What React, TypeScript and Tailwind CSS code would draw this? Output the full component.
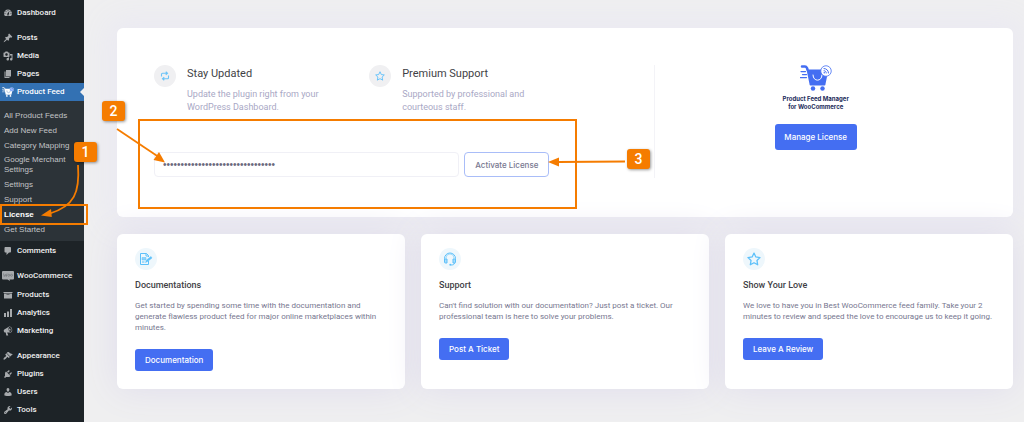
import React from "react";

interface MenuItem {
  label: string;
  icon: React.ReactNode;
}

interface InfoCard {
  title: string;
  text: string;
  action: string;
  icon: React.ReactNode;
}

const DashIcon = ({ d }: { d: string }) => (
  <svg viewBox="0 0 20 20" className="h-[10px] w-[10px] text-[#a7aaad]" fill="currentColor" aria-hidden="true">
    <path d={d} />
  </svg>
);

// Shopping cart with a feed badge, used in the menu and in the license card
const CartLogo = ({ className, cart, badge, line }: { className: string; cart: string; badge: string; line: string }) => (
  <svg viewBox="0 0 64 52" className={className} fill="none" aria-hidden="true">
    <path d="M4 3h6c2 0 3 1 4 3l1 3" stroke={cart} strokeWidth="5" strokeLinecap="round" />
    <path d="M13 9h44l-6 29c0 2-1 3-3 3H22c-2 0-3-1-3-3z" fill={cart} />
    <path d="M2 13h9M5 19h8M1 25h12" stroke={cart} strokeWidth="2.5" strokeLinecap="round" />
    <circle cx="26" cy="47" r="4.5" fill={cart} />
    <circle cx="45" cy="47" r="4.5" fill={cart} />
    <path d="M26 20c0 14 18 14 18 0" stroke={line} strokeWidth="2" strokeLinecap="round" />
    <circle cx="52" cy="12" r="10.5" fill={badge} stroke={cart} strokeWidth="1.6" />
    <path d="M48 7c5 0 9 4 9 9M48 11.500c3 0 4.500 2 4.500 4.500" stroke={cart} strokeWidth="2" strokeLinecap="round" />
    <circle cx="48.500" cy="15.500" r="1.500" fill={cart} />
  </svg>
);

const WooIcon = () => (
  <svg viewBox="0 0 24 20" className="h-[10px] w-[12px]" aria-hidden="true">
    <path d="M2 0h20a2 2 0 0 1 2 2v13a2 2 0 0 1-2 2h-7l1 3-5-3H2a2 2 0 0 1-2-2V2a2 2 0 0 1 2-2z" fill="#a7aaad" />
    <path d="M3 5l1.500 6L7 7l1.500 4L10 5" stroke="#6c7176" strokeWidth="1.300" fill="none" />
    <circle cx="13.500" cy="8.500" r="2" stroke="#6c7176" strokeWidth="1.300" fill="none" />
    <circle cx="19" cy="8.500" r="2" stroke="#6c7176" strokeWidth="1.300" fill="none" />
  </svg>
);

const topMenu: MenuItem[] = [
  {
    label: "Posts",
    icon: (
      <DashIcon d="M10.44 3.02l1.82-1.82 6.36 6.35-1.83 1.82c-1.05-.68-2.48-.57-3.41.36l-.75.75c-.92.93-1.04 2.35-.35 3.41l-1.83 1.82-2.41-2.41-2.8 2.79c-.42.42-3.38 2.71-3.8 2.29s1.86-3.39 2.28-3.81l2.79-2.79L4.1 9.36l1.83-1.82c1.05.69 2.48.57 3.4-.36l.75-.75c.93-.92 1.05-2.35.36-3.41z" />
    ),
  },
  {
    label: "Media",
    icon: (
      <DashIcon d="M13 11V4c0-.55-.45-1-1-1h-1.670L9 1H5L3.670 3H2c-.55 0-1 .45-1 1v7c0 .55.45 1 1 1h10c.55 0 1-.45 1-1zM7 4.500c1.380 0 2.500 1.120 2.500 2.500S8.380 9.500 7 9.500 4.500 8.380 4.500 7 5.620 4.500 7 4.500zM14 6h5v10.500c0 1.380-1.120 2.500-2.500 2.500S14 17.880 14 16.500s1.120-2.500 2.500-2.500c.17 0 .34.02.5.05V9h-3V6zm-4 8.050V13h2v3.500c0 1.380-1.120 2.500-2.500 2.500S7 17.880 7 16.500 8.120 14 9.500 14c.17 0 .34.02.5.05z" />
    ),
  },
  { label: "Pages", icon: <DashIcon d="M6 15V2h10v13H6zm-1 1h8v2H3V5h2v11z" /> },
];

const shopMenu: MenuItem[] = [
  { label: "Products", icon: <DashIcon d="M19 4v2H1V4h18zM2 7h16v10H2V7zm11 3V9H7v1h6z" /> },
  { label: "Analytics", icon: <DashIcon d="M18 18V2h-4v16h4zm-6 0V7H8v11h4zm-6 0v-8H2v8h4z" /> },
  {
    label: "Marketing",
    icon: (
      <DashIcon d="M18.15 5.94c.46 1.62.38 3.22-.02 4.48-.42 1.28-1.26 2.18-2.3 2.48-.16.06-.26.06-.4.06-.06.02-.12.02-.18.02-.06.02-.14.02-.22.02h-6.8l2.22 5.5c.02.14-.06.26-.14.34-.08.1-.24.16-.34.16H6.95c-.1 0-.26-.06-.34-.16-.08-.08-.16-.2-.14-.34l-1-5.5H4.25l-.02-.02c-.5.06-1.08-.18-1.54-.62s-.88-1.08-1.06-1.88c-.24-.8-.2-1.56-.02-2.2.18-.62.58-1.08 1.06-1.3l.02-.02 9-5.4c.1-.06.18-.1.24-.16.06-.04.14-.08.24-.12.16-.08.28-.12.5-.18 1.04-.3 2.24.1 3.22.98s1.84 2.24 2.26 3.86zm-2.58 5.98h-.02c.4-.1.74-.34 1.04-.7.58-.7.86-1.76.86-3.04 0-.64-.1-1.3-.28-1.98-.34-1.36-1.02-2.5-1.78-3.24s-1.68-1.1-2.46-.88c-.82.22-1.4.96-1.7 2-.32 1.04-.28 2.36.06 3.72.38 1.36 1 2.5 1.8 3.24.78.74 1.62 1.1 2.48.88zm-2.54-7.08c.22-.04.42-.02.62.04.38.16.76.48 1.02 1s.42 1.2.42 1.78c0 .3-.04.56-.12.8-.18.48-.44.84-.86.94-.34.1-.8-.06-1.14-.4s-.64-.86-.78-1.5c-.18-.62-.12-1.24.02-1.72s.48-.84.82-.94z" />
    ),
  },
];

const siteMenu: MenuItem[] = [
  {
    label: "Appearance",
    icon: (
      <DashIcon d="M14.48 11.06L7.41 3.99l1.5-1.5c.5-.56 2.3-.47 3.51.32 1.21.8 1.43 1.28 2.91 2.1 1.18.64 2.45 1.26 4.45.85zm-.71.71L6.7 4.7 4.93 6.47c-.39.39-.39 1.02 0 1.41l1.06 1.06c.39.39.39 1.03 0 1.42-.6.6-1.43 1.11-2.21 1.69-.35.26-.7.53-1.01.84C1.43 14.23.4 16.08 1.4 17.07c.99 1 2.84-.03 4.18-1.36.31-.31.58-.66.85-1.02.57-.78 1.08-1.61 1.69-2.21.39-.39 1.02-.39 1.41 0l1.06 1.06c.39.39 1.02.39 1.41 0z" />
    ),
  },
  {
    label: "Plugins",
    icon: (
      <DashIcon d="M13.11 4.36L9.87 7.6 8 5.73l3.24-3.24c.35-.34 1.05-.2 1.56.32.52.51.66 1.21.31 1.55zm-8 1.77l.91-1.12 9.01 9.01-1.19.84c-.71.71-2.63 1.16-3.82 1.16H6.14L4.9 17.26c-.59.59-1.54.59-2.12 0-.59-.58-.59-1.53 0-2.12l1.24-1.24v-3.88c0-1.13.4-3.19 1.09-3.89zm7.26 3.97l3.24-3.24c.34-.35 1.04-.21 1.55.31.52.51.66 1.21.31 1.55l-3.24 3.25z" />
    ),
  },
  {
    label: "Users",
    icon: (
      <DashIcon d="M10 9.25c-2.27 0-2.73-3.44-2.73-3.44C7 4.02 7.82 2 9.97 2c2.16 0 2.98 2.02 2.71 3.81 0 0-.41 3.44-2.68 3.44zm0 2.57L12.72 10c2.39 0 4.52 2.33 4.52 4.53v2.49s-3.65 1.13-7.24 1.13c-3.65 0-7.24-1.13-7.24-1.13v-2.49c0-2.25 1.94-4.48 4.47-4.48z" />
    ),
  },
  {
    label: "Tools",
    icon: (
      <DashIcon d="M16.68 9.77c-1.34 1.34-3.3 1.67-4.95.99l-5.41 6.52c-.99.99-2.59.99-3.58 0s-.99-2.59 0-3.57l6.52-5.42c-.68-1.65-.35-3.61.99-4.95 1.28-1.28 3.12-1.62 4.72-1.06l-2.89 2.89 2.82 2.82 2.86-2.87c.53 1.58.18 3.39-1.08 4.65zM3.81 16.21c.4.39 1.04.39 1.43 0 .4-.4.4-1.04 0-1.43-.39-.4-1.03-.4-1.43 0-.39.39-.39 1.03 0 1.43z" />
    ),
  },
];

const subMenu = [
  "All Product Feeds",
  "Add New Feed",
  "Category Mapping",
  "Google Merchant Settings",
  "Settings",
  "Support",
  "License",
  "Get Started",
];

const RepeatGlyph = () => (
  <svg viewBox="0 0 20 20" className="h-[10px] w-[10px]" fill="none" stroke="#6cc4f8" strokeWidth="2.2" aria-hidden="true">
    <path d="M3 11V6.500A2 2 0 0 1 5 4.500h9M11.500 1.500l3.500 3-3.500 3M17 9v4.500a2 2 0 0 1-2 2H6M8.500 12.500l-3.500 3 3.500 3" />
  </svg>
);

const StarGlyph = ({ className }: { className: string }) => (
  <svg viewBox="0 0 20 20" className={className} fill="none" stroke="#5cc0fa" strokeWidth="1.8" strokeLinejoin="round" aria-hidden="true">
    <path d="M10 1.500l2.600 5.600 6 .8-4.400 4.200 1.100 6.200L10 15.300l-5.300 3 1.100-6.200L1.400 7.900l6-.8z" />
  </svg>
);

const DocumentGlyph = () => (
  <svg viewBox="0 0 28 28" className="h-[14px] w-[14px]" fill="none" stroke="#5cc0fa" strokeWidth="2" aria-hidden="true">
    <path d="M19 18v7H3V3h12l4 4v3" />
    <path d="M14 3v5h5" />
    <path d="M6 11h8v5H6z" fill="#8ed3fb" strokeWidth="1" />
    <path d="M6 20h5" />
    <path d="M13 21l2-5 9-7 2 3-9 7z" fill="#5cc0fa" strokeWidth="1" />
  </svg>
);

const HeadsetGlyph = () => (
  <svg viewBox="0 0 28 28" className="h-[14px] w-[14px]" fill="none" stroke="#5cc0fa" strokeWidth="2" aria-hidden="true">
    <path d="M3 15v-2a11 11 0 0 1 22 0v2" />
    <path d="M6 13v-1a8 8 0 0 1 16 0v1" strokeWidth="1" />
    <path d="M3 14h5v8H5a2 2 0 0 1-2-2zM20 14h5v6a2 2 0 0 1-2 2h-3z" fill="#a5dcfc" />
    <path d="M23 22c0 3-3 4-7 4" />
    <circle cx="14.500" cy="25.500" r="1.800" fill="#5cc0fa" stroke="none" />
  </svg>
);

const cards: InfoCard[] = [
  {
    title: "Documentations",
    text: "Get started by spending some time with the documentation and generate flawless product feed for major online marketplaces within minutes.",
    action: "Documentation",
    icon: <DocumentGlyph />,
  },
  {
    title: "Support",
    text: "Can't find solution with our documentation? Just post a ticket. Our professional team is here to solve your problems.",
    action: "Post A Ticket",
    icon: <HeadsetGlyph />,
  },
  {
    title: "Show Your Love",
    text: "We love to have you in Best WooCommerce feed family. Take your 2 minutes to review and speed the love to encourage us to keep it going.",
    action: "Leave A Review",
    icon: <StarGlyph className="h-[14px] w-[14px]" />,
  },
];

const MenuLink = ({ label, icon }: MenuItem) => (
  <a href="#" className="flex h-[18px] items-center text-[#f0f0f1]">
    <span className="flex w-[17px] justify-center pr-[2px]">{icon}</span>
    {label}
  </a>
);

const MenuGroup = ({ items }: { items: MenuItem[] }) => (
  <>
    {items.map((item) => (
      <MenuLink key={item.label} {...item} />
    ))}
  </>
);

const Sidebar = () => (
  <nav className="relative z-10 w-[84px] shrink-0 bg-[#1d2327] pt-1 text-[8px] font-medium">
    <MenuLink
      label="Dashboard"
      icon={
        <DashIcon d="M3.76 16h12.48c1.1-1.37 1.76-3.11 1.76-5 0-4.42-3.58-8-8-8s-8 3.58-8 8c0 1.89.66 3.63 1.76 5zM10 4c.55 0 1 .45 1 1s-.45 1-1 1-1-.45-1-1 .45-1 1-1zM6 6c.55 0 1 .45 1 1s-.45 1-1 1-1-.45-1-1 .45-1 1-1zm8 0c.55 0 1 .45 1 1s-.45 1-1 1-1-.45-1-1 .45-1 1-1zm-5.37 5.55L12 7v6c0 1.1-.9 2-2 2s-2-.9-2-2c0-.57.24-1.08.63-1.45zM4 10c.55 0 1 .45 1 1s-.45 1-1 1-1-.45-1-1 .45-1 1-1zm12 0c.55 0 1 .45 1 1s-.45 1-1 1-1-.45-1-1 .45-1 1-1zm-5 3c0-.55-.45-1-1-1s-1 .45-1 1 .45 1 1 1 1-.45 1-1z" />
      }
    />
    <div className="mt-[7px]">
      <MenuGroup items={topMenu} />
      <a href="#" className="flex h-[18px] items-center bg-[#3371b3] text-white">
        <span className="flex w-[17px] justify-center pr-[2px]">
          <CartLogo className="h-[10px] w-[12px]" cart="#ffffff" badge="#5b8df5" line="#3371b3" />
        </span>
        Product Feed
        <span className="ml-auto border-y-4 border-r-4 border-y-transparent border-r-[#efeff0]" />
      </a>
    </div>
    <ul className="bg-[#2c3338] pt-[7px] pb-1 pl-1 font-['Liberation_Sans'] font-normal text-[#c3c4c7]">
      {subMenu.map((label) => (
        <li key={label} className={label === "License" ? "font-bold text-white" : ""}>
          <a href="#" className="flex min-h-[15px] w-[72px] items-center py-[2px] leading-[10px]">
            {label}
          </a>
        </li>
      ))}
    </ul>
    <div className="mt-px">
      <MenuLink
        label="Comments"
        icon={
          <DashIcon d="M5 2h9c1.1 0 2 .9 2 2v7c0 1.1-.9 2-2 2h-2l-5 5v-5H5c-1.1 0-2-.9-2-2V4c0-1.1.9-2 2-2z" />
        }
      />
    </div>
    <div className="mt-[7px]">
      <MenuLink label="WooCommerce" icon={<WooIcon />} />
      <div className="mt-px">
        <MenuGroup items={shopMenu} />
      </div>
    </div>
    <div className="mt-[7px]">
      <MenuGroup items={siteMenu} />
    </div>
  </nav>
);

const Feature = ({ title, text, icon }: { title: string; text: string; icon: React.ReactNode }) => (
  <div className="flex gap-[11px]">
    <span className="flex h-[22px] w-[22px] shrink-0 items-center justify-center rounded-full bg-[#f0f0f2]">
      {icon}
    </span>
    <div>
      <h2 className="text-[11px] leading-[17px] text-[#3f3f46]">{title}</h2>
      <p className="mt-[6px] max-w-[150px] text-[9px] leading-[13px] text-[#a9a8c5]">{text}</p>
    </div>
  </div>
);

const LicenseCard = () => (
  <section className="flex rounded-md bg-white px-[37px] pt-[37px] pb-[39px] shadow-[0_0_30px_12px_#ebeaf2]">
    <div className="w-[61%] border-r border-[#f3f3f7] pb-px">
      <div className="grid w-[86%] grid-cols-2">
        <Feature
          title="Stay Updated"
          text="Update the plugin right from your WordPress Dashboard."
          icon={<RepeatGlyph />}
        />
        <Feature
          title="Premium Support"
          text="Supported by professional and courteous staff."
          icon={<StarGlyph className="h-[10px] w-[10px]" />}
        />
      </div>
      <form className="mt-[38px] flex w-[79%] gap-[5px]">
        <input
          type="password"
          aria-label="License key"
          defaultValue="wpfm-license-key-0123456789-abcd"
          className="h-[25px] min-w-0 flex-1 rounded border border-[#f0f0f6] px-2 font-['Liberation_Sans'] text-[10px] text-[#6a6a7c]"
        />
        <button
          type="button"
          className="h-[25px] w-[85px] rounded border border-[#a9bdf8] font-['Inter'] text-[8px] font-medium text-[#77778f]"
        >
          Activate License
        </button>
      </form>
    </div>
    <div className="flex flex-1 flex-col items-center">
      <CartLogo className="h-[26px] w-[32px]" cart="#446ef2" badge="#ffffff" line="#ffffff" />
      <p className="mt-[4px] text-center font-['Inter'] text-[6px] leading-[8px] font-bold text-[#1c2b5a]">
        Product Feed Manager
        <br />
        for WooCommerce
      </p>
      <button
        type="button"
        className="mt-[13px] h-[26px] w-[82px] rounded-[3px] bg-[#446ef2] font-['Inter'] text-[8px] font-medium text-white"
      >
        Manage License
      </button>
    </div>
  </section>
);

const Badge = ({ value, className }: { value: number; className: string }) => (
  <span
    className={`absolute flex h-[20px] w-[23px] items-center justify-center rounded-[3px] bg-[#f57c00] text-[14px] font-medium text-white shadow-[1px_1px_3px_#00000066] ${className}`}
  >
    {value}
  </span>
);

// Numbered steps drawn over the page
const Annotations = () => (
  <div className="pointer-events-none absolute top-0 left-0 z-20">
    <span className="absolute top-[204px] left-0 h-[21px] w-[88px] border-2 border-[#f57c00]" />
    <span className="absolute top-[119px] left-[138px] h-[90px] w-[439px] border-2 border-[#f57c00]" />
    <svg width="660" height="230" className="absolute top-0 left-0 max-w-none" fill="none" stroke="#f57c00" strokeWidth="1.8">
      <path d="M78 165C80 193 74 206 50 213.500" />
      <path d="M41 215.500l10-6.500.8 8z" fill="#f57c00" stroke="none" />
      <path d="M117 129l41 27.500" />
      <path d="M165 162.500l-11.500-2.500 5.500-8z" fill="#f57c00" stroke="none" />
      <path d="M625 161.500l-67 .5" />
      <path d="M548 162l11-4.500v9z" fill="#f57c00" stroke="none" />
    </svg>
    <Badge value={1} className="top-[142px] left-[74px]" />
    <Badge value={2} className="top-[101px] left-[102px]" />
    <Badge value={3} className="top-[149px] left-[627px]" />
  </div>
);

export default function App() {
  return (
    <div className="relative flex min-h-screen overflow-hidden bg-[#efeff0] font-['Roboto',sans-serif]">
      <Sidebar />
      <main className="flex-1 pt-[28px] pr-[11px] pl-[33px]">
        <LicenseCard />
        <div className="mt-[17px] grid grid-cols-3 gap-4">
          {cards.map((card) => (
            <section key={card.title} className="rounded-md bg-white px-[18px] pt-[14px] pb-[18px] shadow-[0_0_35px_#dfdcec]">
              <span className="flex h-[22px] w-[22px] items-center justify-center rounded-full bg-[#eef7fc]">
                {card.icon}
              </span>
              <h3 className="mt-[8px] text-[9px] leading-[14px] font-medium text-[#3f3f46]">{card.title}</h3>
              <p className="mt-[8px] text-[8px] leading-[11px] text-[#77778f]">{card.text}</p>
              <button
                type="button"
                className="mt-[16px] h-[22px] rounded-[3px] bg-[#446ef2] px-[10px] font-['Inter'] text-[8px] font-medium text-white"
              >
                {card.action}
              </button>
            </section>
          ))}
        </div>
      </main>
      <Annotations />
    </div>
  );
}
